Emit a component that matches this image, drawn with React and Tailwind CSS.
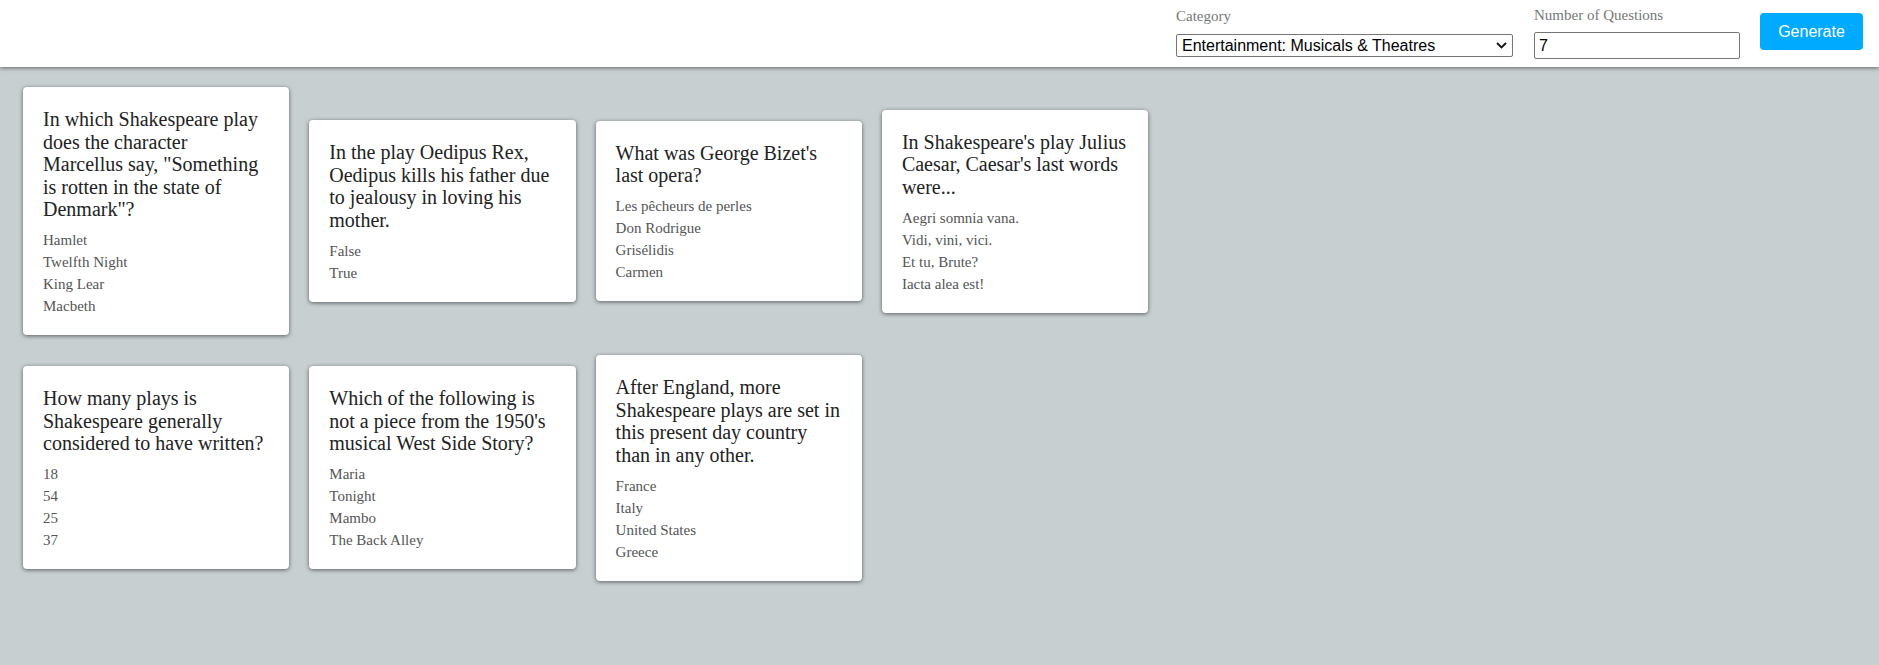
import React from "react";

const cards = [
  {
    q: 'In which Shakespeare play does the character Marcellus say, "Something is rotten in the state of Denmark"?',
    a: ["Hamlet", "Twelfth Night", "King Lear", "Macbeth"],
  },
  {
    q: "In the play Oedipus Rex, Oedipus kills his father due to jealousy in loving his mother.",
    a: ["False", "True"],
  },
  {
    q: "What was George Bizet's last opera?",
    a: ["Les pêcheurs de perles", "Don Rodrigue", "Grisélidis", "Carmen"],
  },
  {
    q: "In Shakespeare's play Julius Caesar, Caesar's last words were...",
    a: ["Aegri somnia vana.", "Vidi, vini, vici.", "Et tu, Brute?", "Iacta alea est!"],
  },
  {
    q: "How many plays is Shakespeare generally considered to have written?",
    a: ["18", "54", "25", "37"],
  },
  {
    q: "Which of the following is not a piece from the 1950's musical West Side Story?",
    a: ["Maria", "Tonight", "Mambo", "The Back Alley"],
  },
  {
    q: "After England, more Shakespeare plays are set in this present day country than in any other.",
    a: ["France", "Italy", "United States", "Greece"],
  },
];

export default function App() {
  return (
    <div className="min-h-screen bg-[#c7cfd1] font-['Liberation_Serif',serif]">
      <header className="relative z-10 h-[67px] bg-white shadow-[0_1px_4px_rgba(0,0,0,0.5)] flex items-center justify-end pb-[4px] pr-[16px]">
        <div className="flex flex-col mr-[21px]">
          <label className="text-[15px] text-[#777] mb-[6px]">Category</label>
          <div className="relative">
            <select
              defaultValue="musicals"
              className="appearance-none w-[337px] h-[23px] border border-[#767676] rounded-[2px] bg-white text-black text-[16px] leading-[21px] font-['Liberation_Sans',Arial,sans-serif] pl-[5px] pr-[20px]"
            >
              <option value="musicals">Entertainment: Musicals &amp; Theatres</option>
            </select>
            <svg
              className="pointer-events-none absolute right-[6px] top-[8px]"
              width="11"
              height="7"
              viewBox="0 0 11 7"
              fill="none"
            >
              <path d="M1 1L5.5 5.5L10 1" stroke="#111" strokeWidth="1.8" />
            </svg>
          </div>
        </div>
        <div className="flex flex-col mr-[20px]">
          <label className="text-[15px] text-[#777] mb-[6px]">Number of Questions</label>
          <input
            type="text"
            defaultValue="7"
            className="w-[206px] h-[27px] border border-[#767676] rounded-[2px] bg-white text-black text-[16px] font-['Liberation_Sans',Arial,sans-serif] px-[4px]"
          />
        </div>
        <button className="w-[103px] h-[37px] rounded-[4px] bg-[#00aaff] text-white text-[16px] font-['Liberation_Sans',Arial,sans-serif]">
          Generate
        </button>
      </header>
      <main className="w-[1170px] pl-[13px] pt-[10px] flex flex-wrap items-center">
        {cards.map((c, i) => (
          <div
            key={i}
            className="w-[266.3px] m-[10px] bg-white rounded-[4px] shadow-[0_1px_4px_rgba(0,0,0,0.55)] px-[20px] pt-[21px] pb-[18px]"
          >
            <div className="text-[20px] leading-[22.5px] text-[#222] mb-[8.5px]">{c.q}</div>
            {c.a.map((ans, j) => (
              <div key={j} className="text-[15px] leading-[22px] text-[#555]">
                {ans}
              </div>
            ))}
          </div>
        ))}
      </main>
    </div>
  );
}
